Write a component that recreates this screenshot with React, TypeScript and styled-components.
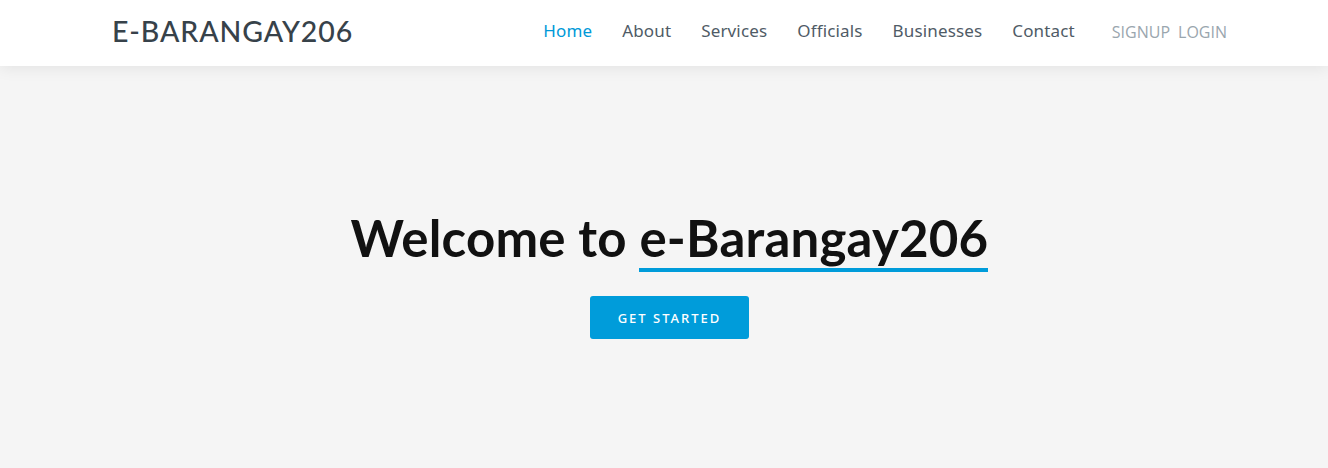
import React from "react";
import styled, { createGlobalStyle } from "styled-components";

const Global = createGlobalStyle`
  html, body { margin: 0; padding: 0; }
  body { background: #f5f5f5; font-family: "Open Sans", sans-serif; }
  * { box-sizing: border-box; }
`;

const Header = styled.header`
  height: 66px;
  background: #fff;
  box-shadow: 0 2px 15px rgba(0, 0, 0, 0.08);
  position: relative;
  z-index: 2;
`;

const HeaderInner = styled.div`
  height: 100%;
  padding: 0 101px 0 112px;
  display: flex;
  align-items: center;
`;

const Logo = styled.a`
  font-family: "Lato", "Noto Sans", sans-serif;
  font-size: 28.5px;
  font-weight: 500;
  letter-spacing: 0.9px;
  color: #37424a;
  text-decoration: none;
  margin-top: -4px;
`;

const Nav = styled.nav`
  margin-left: auto;
  display: flex;
  align-items: center;
  gap: 30px;
  margin-top: -5px;
`;

const NavLink = styled.a<{ $active?: boolean }>`
  font-family: "Noto Sans", "Inter", sans-serif;
  font-size: 17px;
  font-weight: 400;
  letter-spacing: 0.15px;
  color: ${(p) => (p.$active ? "#0099d8" : "#4f5b66")};
  text-decoration: none;
`;

const Auth = styled.div`
  display: flex;
  gap: 8px;
  margin-left: 37px;
  margin-top: -3px;
`;

const AuthLink = styled.a`
  font-family: "Open Sans", sans-serif;
  font-size: 16px;
  color: #9aa6ae;
  text-decoration: none;
`;

const Hero = styled.section`
  height: 402px;
  display: flex;
  flex-direction: column;
  align-items: center;
  padding-top: 141px;
  padding-left: 11px;
`;

const Title = styled.h1`
  margin: 0;
  font-family: "Lato", "Noto Sans", sans-serif;
  font-size: 51px;
  font-weight: 700;
  letter-spacing: 0.2px;
  color: #111;
  line-height: 62px;
`;

const Brand = styled.span`
  border-bottom: 4px solid #009cda;
`;

const Button = styled.a`
  margin-top: 27px;
  width: 159px;
  height: 43px;
  display: flex;
  align-items: center;
  justify-content: center;
  background: #009cda;
  border-radius: 3px;
  color: #fff;
  font-family: "Noto Sans", "Inter", sans-serif;
  font-size: 13px;
  font-weight: 500;
  letter-spacing: 2px;
  text-decoration: none;
`;

export default function App() {
  return (
    <>
      <Global />
      <Header>
        <HeaderInner>
          <Logo href="#">E-BARANGAY206</Logo>
          <Nav>
            <NavLink $active href="#">Home</NavLink>
            <NavLink href="#">About</NavLink>
            <NavLink href="#">Services</NavLink>
            <NavLink href="#">Officials</NavLink>
            <NavLink href="#">Businesses</NavLink>
            <NavLink href="#">Contact</NavLink>
          </Nav>
          <Auth>
            <AuthLink href="#">SIGNUP</AuthLink>
            <AuthLink href="#">LOGIN</AuthLink>
          </Auth>
        </HeaderInner>
      </Header>
      <Hero>
        <Title>
          Welcome to <Brand>e-Barangay206</Brand>
        </Title>
        <Button href="#">GET STARTED</Button>
      </Hero>
    </>
  );
}
